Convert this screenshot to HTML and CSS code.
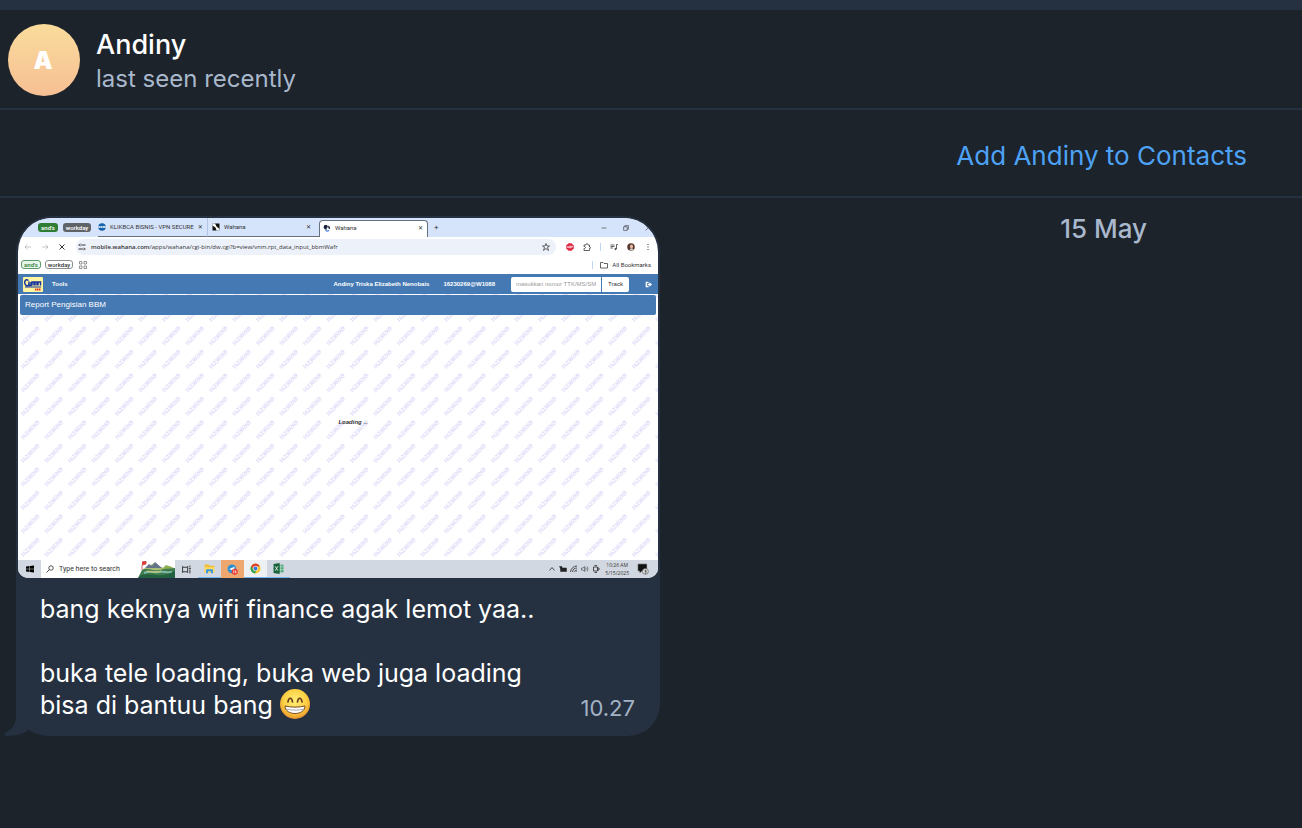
FILE: index.html
```html
<!DOCTYPE html>
<html lang="id">
<head>
    <meta charset="UTF-8">
    <title>Andiny</title>
    <link rel="stylesheet" href="styles.css">
</head>
<body>

    <header class="chat-header">
        <div class="avatar">A</div>
        <div class="peer">
            <h1>Andiny</h1>
            <p>last seen recently</p>
        </div>
    </header>

    <div class="contact-bar">
        <button type="button">Add Andiny to Contacts</button>
    </div>

    <main class="chat">
        <article class="bubble">
            <div class="photo">

                <!-- browser tabs -->
                <div class="tabs">
                    <span class="chip green">and's</span>
                    <span class="chip gray wide">workday</span>
                    <div class="tab first">
                        <svg class="icon" viewBox="0 0 16 16"><circle cx="8" cy="8" r="7.5" fill="#1463ac"/><path d="M1 8h14" stroke="#fff" stroke-width="4"/><path d="M3 8h10" stroke="#1463ac" stroke-width="2" stroke-dasharray="3 1"/></svg>
                        <span class="title">KLIKBCA BISNIS - VPN SECURE</span>
                        <span class="close">✕</span>
                    </div>
                    <div class="tab second">
                        <svg class="icon" viewBox="0 0 16 16"><path d="M1 1h14v14H1z" fill="#111"/><path d="M1 1l5 0 3 6 6 5v3H9L7 9 1 5z" fill="#fff"/></svg>
                        <span class="title">Wahana</span>
                        <span class="close">✕</span>
                    </div>
                    <div class="tab active">
                        <svg class="icon" viewBox="0 0 16 16"><path d="M3 2h5l2 4-3 2 1 3H4L1 7z" fill="#16223a"/><path d="M10 3l4 3v4l-3-1z" fill="#16223a"/><path d="M4 11l4 2 5-1-2 3H6z" fill="#2f6fe0"/></svg>
                        <span class="title">Wahana</span>
                        <span class="close">✕</span>
                    </div>
                    <span class="plus">+</span>
                    <div class="window-buttons">
                        <svg viewBox="0 0 10 10"><path d="M1 5h8"/></svg>
                        <svg viewBox="0 0 10 10"><path d="M1 3h6v6H1zM3 3V1h6v6H7"/></svg>
                        <svg viewBox="0 0 10 10"><path d="M1 1l8 8M9 1l-8 8"/></svg>
                    </div>
                </div>

                <!-- address row -->
                <div class="toolbar">
                    <div class="nav-icons">
                        <svg viewBox="0 0 16 16" class="dim"><path d="M14 8H2M7 3L2 8l5 5"/></svg>
                        <svg viewBox="0 0 16 16" class="dim"><path d="M2 8h12M9 3l5 5-5 5"/></svg>
                        <svg viewBox="0 0 16 16"><path d="M3 3l10 10M13 3L3 13" stroke-width="2"/></svg>
                    </div>
                    <div class="address">
                        <svg viewBox="0 0 16 16"><path d="M1 4h3M8 4h7M1 12h7M12 12h3" stroke-width="2"/><circle cx="5" cy="4" r="2"/><circle cx="11" cy="12" r="2"/></svg>
                        <span><b>mobile.wahana.com</b>/apps/wahana/cgi-bin/dw.cgi?b=view/vnm.rpt_data_input_bbmWafr</span>
                        <svg class="star" viewBox="0 0 16 16"><path d="M8 1l2 5h5l-4 3 2 6-5-4-5 4 2-6-4-3h5z" stroke-width="1.5"/></svg>
                    </div>
                    <div class="extensions">
                        <svg viewBox="0 0 16 16"><path d="M5 1h6l4 4v6l-4 4H5l-4-4V5z" fill="#df2943" stroke="#df2943"/><path d="M3 10V7h2v3M3 8.5h2M7 10V6h2v4H7M7 8h2M11 10V6h2v2h-2" stroke="#fff"/></svg>
                        <svg viewBox="0 0 16 16"><path d="M2 4h4c0-4 4-4 4 0h3v4c3 0 3 3 0 3v4H2v-4c4 0 4-4 0-4z" stroke-width="1.5"/></svg>
                        <i class="divider"></i>
                        <svg viewBox="0 0 16 16"><path d="M1 4h8M1 7h8M1 10h5M13 12V3h3" stroke-width="1.5"/><circle cx="11" cy="12" r="1.5" fill="#333"/></svg>
                        <svg class="profile" viewBox="0 0 16 16"><circle cx="8" cy="8" r="7.5" fill="#59392f" stroke="none"/><ellipse cx="9" cy="7" rx="3" ry="4" fill="#e9bda5" stroke="none"/><path d="M5 15l2-4h4l2 3z" fill="#dad5d9" stroke="none"/></svg>
                        <svg viewBox="0 0 16 16"><path d="M8 2v2M8 7v2M8 12v2" stroke-width="2"/></svg>
                    </div>
                </div>

                <!-- bookmarks -->
                <div class="bookmarks">
                    <span class="chip line-green">and's</span>
                    <span class="chip line-gray wide">workday</span>
                    <svg class="grid" viewBox="0 0 16 16"><path d="M1 1h5v5H1zM10 1h5v5h-5zM1 10h5v5H1zM10 10h5v5h-5z"/></svg>
                    <div class="all">
                        <svg viewBox="0 0 16 16"><path d="M1 3h5l2 2h7v9H1z" stroke-width="1.5"/></svg>
                        <span>All Bookmarks</span>
                    </div>
                </div>

                <!-- report page -->
                <div class="page">
                    <svg class="watermark" aria-hidden="true">
                        <defs>
                            <pattern id="stamp" y="2" width="23.5" height="23.5" patternUnits="userSpaceOnUse">
                                <text x="5" y="23" transform="rotate(-46 5 23)">16230269</text>
                            </pattern>
                        </defs>
                        <rect width="100%" height="100%" fill="url(#stamp)"/>
                    </svg>
                    <nav class="site-nav">
                        <svg class="logo" viewBox="0 0 40 30"><rect width="40" height="30" rx="2" fill="#fff4a0"/><path d="M11 7C5 3 2 9 4 14s7 5 8 0V9M12 10v7l4 0V10M18 17v-7h4v7M24 17v-7h4v7M30 17v-7h5v7" fill="none" stroke="#16349e" stroke-width="3"/><path d="M4 20h32" stroke="#16349e" stroke-width="2"/><path d="M24 25h12" stroke="#e23222" stroke-width="4" stroke-dasharray="3 1"/></svg>
                        <a href="#">Tools</a>
                        <span class="user">Andiny Triska Elizabeth Nenobais</span>
                        <span class="user-id">16230269@W1088</span>
                        <form class="track">
                            <input type="text" aria-label="Nomor" placeholder="masukkan nomor TTK/MS/SM">
                            <button type="button">Track</button>
                        </form>
                        <svg class="logout" viewBox="0 0 16 16"><path d="M8 3H3v10h5M6 8h6" fill="none" stroke="#fff" stroke-width="3"/><path d="M10 3l6 5-6 5z" fill="#fff"/></svg>
                    </nav>
                    <h2>Report Pengisian BBM</h2>
                    <p class="loading">Loading <small>...</small></p>
                </div>

                <!-- windows taskbar -->
                <div class="taskbar">
                    <div class="start">
                        <svg viewBox="0 0 16 16"><path d="M0 3l7-1v5.5H0zM8 2l8-1v6.5H8zM0 8.5h7V14l-7-1zM8 8.5h8V15l-8-1z" fill="#000"/></svg>
                    </div>
                    <div class="search">
                        <svg viewBox="0 0 16 16"><circle cx="10" cy="6" r="4.5" stroke-width="1.5"/><path d="M7 9l-6 6" stroke-width="1.5"/></svg>
                        <span>Type here to search</span>
                        <svg class="hills" viewBox="0 0 37 17"><path d="M5 8l6-3 5-3 5 4 6 1 5-2 5 4v8H2z" fill="#a8bd76"/><path d="M7 7l4-4 3 2 3-4 7 6z" fill="#64748a"/><path d="M24 8l4-4 8 3v5H20z" fill="#8eae50"/><path d="M4 9c8-3 10 2 18 0s10-1 15-2v10H0z" fill="#3d7a4e"/><path d="M6 12c6-3 11 0 15-1s8 1 13 0" fill="none" stroke="#80b9a5" stroke-width="2"/><path d="M9 10c7 2 11 1 14 0" fill="none" stroke="#e4cf6a" stroke-width="1"/><path d="M0 17c3-5 11-4 18-3s13-1 19-4v7z" fill="#246142"/><path d="M4 1l4-1v3l-4 1v5" fill="#df3c37" stroke="#b93835" stroke-width=".7"/></svg>
                    </div>
                    <div class="app small">
                        <svg viewBox="0 0 16 16"><path d="M1 2v2h9V2M1 14v-2h9v2M1 4v8M10 4v8M14 1v3M14 8v7M12 6h4" fill="none" stroke="#222" stroke-width="1.5"/></svg>
                    </div>
                    <div class="app open">
                        <svg viewBox="0 0 16 16"><path d="M1 2h6l1 2h7v10H1z" fill="#f4bd31"/><path d="M1 6h14v8H1z" fill="#ffdc68"/><path d="M3 15V9h10v6h-3v-3H6v3z" fill="#3796df"/></svg>
                    </div>
                    <div class="app alert">
                        <svg viewBox="0 0 20 20"><circle cx="9" cy="9" r="8" fill="#2c91d1"/><path d="M4 9l10-4-2 9-4-3z" fill="#fff"/><circle cx="14" cy="14" r="5.5" fill="#e83932"/><path d="M12 11v6M16 11l-2 4h3M16 13v4" stroke="#fff" fill="none"/></svg>
                    </div>
                    <div class="app open current">
                        <svg viewBox="0 0 20 20"><circle cx="10" cy="10" r="9" fill="#f4c52e"/><path d="M2 6a9 9 0 0 1 16 0l-8 1-3 5z" fill="#df4034"/><path d="M2 6l5 8 4 1-2 4A9 9 0 0 1 2 6z" fill="#30a452"/><circle cx="10" cy="10" r="4.5" fill="#fff"/><circle cx="10" cy="10" r="3.5" fill="#3479db"/></svg>
                    </div>
                    <div class="app open">
                        <svg viewBox="0 0 20 20"><path d="M9 3h10v14H9z" fill="#4aa875"/><path d="M14 3v14M9 7h10M9 12h10" stroke="#d7eddf"/><path d="M1 2l11-2v20L1 18z" fill="#18633b"/><path d="M4 6l5 8M9 6l-5 8" stroke="#fff" stroke-width="1.5"/></svg>
                    </div>
                    <div class="tray">
                        <svg viewBox="0 0 16 16"><path d="M3 11l5-6 5 6" stroke-width="1.5"/></svg>
                        <svg viewBox="0 0 16 16"><path d="M3 6h12v7H3zM1 3h5v4H3z" fill="#222"/></svg>
                        <svg viewBox="0 0 16 16"><path d="M1 14A13 13 0 0 1 14 2M5 14a9 9 0 0 1 9-8M9 14a5 5 0 0 1 5-4M13 14v-1" stroke-width="1.5"/></svg>
                        <svg viewBox="0 0 16 16"><path d="M1 6h3l3-3v10l-3-3H1zM9 5q3 3 0 6M12 3q4 5 0 10"/></svg>
                        <svg viewBox="0 0 16 16"><path d="M3 4h8v8H3zM5 1h5M5 15h5M11 6h3v4h-3" stroke-width="1.5"/></svg>
                        <div class="clock">10:26 AM<br>5/15/2025</div>
                        <svg class="notice" viewBox="0 0 20 20"><path d="M2 2h14v11H8l-3 3v-3H2z" fill="#111"/><circle cx="14" cy="14" r="5" fill="#ddd" stroke="#555"/><path d="M13 12h2v2h-2M15 14v3h-2" stroke="#222"/></svg>
                    </div>
                </div>
            </div>

            <div class="message">
                <p>bang keknya wifi finance agak lemot yaa..<br><br>buka tele loading, buka web juga loading<br>bisa di bantuu bang<svg class="emoji" viewBox="0 0 32 32" role="img" aria-label="😁">
                    <defs>
                        <radialGradient id="face" cx=".5" cy=".4" r=".6">
                            <stop offset="0" stop-color="#fff078"/>
                            <stop offset=".65" stop-color="#fccf43"/>
                            <stop offset="1" stop-color="#e9922b"/>
                        </radialGradient>
                    </defs>
                    <circle cx="16" cy="16" r="15" fill="url(#face)"/>
                    <path d="M9 14c.5-5 4-5 4.5 0M18.5 14c.5-5 4-5 4.5 0" fill="none" stroke="#70401b" stroke-width="1.7" stroke-linecap="round"/>
                    <path d="M6 18c6 1.500 14 1.500 20 0 0 10-20 10-20 0z" fill="#fff" stroke="#7b4a1d"/>
                    <path d="M7 21c6 1.500 12 1.500 18 0" fill="none" stroke="#a9a9a9"/>
                </svg></p>
                <time>10.27</time>
            </div>
            <svg class="tail" viewBox="0 0 26 36"><path d="M12 0v16c0 9-5 14-11 17-1 1-1 3 1 3 10 0 18-2 24-7V0z" fill="#253040"/></svg>
        </article>
        <time class="day">15 May</time>
    </main>

</body>
</html>
```

FILE: styles.css
```css
* {
    margin: 0;
    padding: 0;
    box-sizing: border-box;
}
body {
    background-color: #1c232b;
    border-top: 10px solid #253040;
    font-family: Inter, sans-serif;
    font-size: 26px;
    color: white;
}
button {
    border: none;
    background: none;
    font-family: inherit;
    cursor: pointer;
}
.chat-header {
    display: flex;
    align-items: center;
    gap: 16px;
    padding: 14px 8px 12px;
    border-bottom: 2px solid #253040;
}
.avatar {
    width: 72px;
    height: 72px;
    padding: 1px 2px 0 0;
    border-radius: 50%;
    background: linear-gradient(#fadc9c, #f6bf94);
    font-size: 24px;
    font-weight: 900;
    line-height: 72px;
    text-align: center;
}
.peer {
    padding-top: 3px;
}
.peer h1 {
    font-size: 27px;
    font-weight: 500;
    line-height: 34px;
}
.peer p {
    font-size: 24px;
    line-height: 34px;
    color: #a9b8cc;
}
.contact-bar {
    display: flex;
    justify-content: flex-end;
    padding: 26px 55px 20px;
    border-bottom: 2px solid #253040;
}
.contact-bar button {
    font-size: 26px;
    line-height: 40px;
    color: #4da2f5;
}
.chat {
    display: flex;
    justify-content: space-between;
    align-items: flex-start;
    padding: 18px 155px 18px 16px;
}
.day {
    font-size: 26px;
    font-weight: 500;
    line-height: 26px;
    color: #a9b8cc;
}
.bubble {
    position: relative;
    width: 644px;
    padding: 2px;
    border-radius: 36px 36px 32px 32px;
    background-color: #253040;
}
.tail {
    position: absolute;
    left: -12px;
    bottom: 0;
    width: 26px;
    height: 36px;
}
.message {
    display: flex;
    justify-content: space-between;
    align-items: flex-end;
    padding: 15px 23px 13px 22px;
}
.message p {
    font-size: 25px;
    line-height: 32px;
}
.message time {
    font-size: 22px;
    line-height: 26px;
    color: #a3b3c6;
}
.emoji {
    width: 32px;
    height: 32px;
    margin-top: -6px;
    margin-left: 6px;
    vertical-align: -6px;
}

/* shared photo */
.photo {
    display: flex;
    flex-direction: column;
    height: 360px;
    border-radius: 34px 34px 10px 10px;
    overflow: hidden;
    background-color: white;
    color: #333;
    font-family: Roboto, sans-serif;
    font-size: 6px;
    line-height: 8px;
    white-space: nowrap;
}
.photo svg {
    display: block;
    flex: none;
}
.tabs {
    display: flex;
    align-items: center;
    height: 19px;
    padding-left: 20px;
    background-color: #d5e3fb;
}
.chip {
    flex: none;
    width: 20px;
    border-radius: 3px;
    line-height: 9px;
    font-weight: 500;
    text-align: center;
}
.chip.wide {
    width: 28px;
}
.chip.green {
    margin-right: 5px;
    background-color: #2f7d35;
    color: white;
}
.chip.gray {
    background-color: #5f6368;
    color: white;
}
.chip.line-green {
    border: 1px solid #5b9b67;
    background-color: #e6f5e9;
    color: #2f7d35;
    line-height: 7px;
}
.chip.line-gray {
    border: 1px solid #8a8d91;
    line-height: 7px;
}
.tab {
    display: flex;
    flex: none;
    align-items: center;
    gap: 4px;
    height: 19px;
    border-bottom: 1px solid #68707c;
}
.tab .icon {
    width: 8px;
    height: 8px;
}
.tab .title {
    flex: 1;
}
.tab .close {
    font-family: "DejaVu Sans", sans-serif;
}
.tab.first {
    width: 109px;
    margin-left: 7px;
    padding-right: 8px;
}
.tab.second {
    width: 112px;
    padding: 0 8px 0 4px;
    border-left: 1px solid #b2c5e5;
}
.tab.active {
    width: 109px;
    height: 17px;
    align-self: flex-end;
    padding: 0 4px 3px 3px;
    border: 1px solid #68707c;
    border-bottom: none;
    border-radius: 4px 4px 0 0;
    background-color: white;
}
.plus {
    margin-left: 6px;
    font-size: 8px;
}
.window-buttons {
    display: flex;
    gap: 16px;
    margin-left: auto;
    padding-right: 7px;
}
.window-buttons svg {
    width: 6px;
    height: 6px;
    fill: none;
    stroke: #333;
}
.toolbar {
    display: flex;
    align-items: center;
    height: 20px;
    padding: 0 6px;
}
.toolbar svg,
.bookmarks svg {
    width: 8px;
    height: 8px;
    fill: none;
    stroke: #333;
}
.toolbar .dim {
    stroke: #8a8d91;
}
.nav-icons {
    display: flex;
    gap: 9px;
}
.address {
    display: flex;
    flex: 1;
    align-items: center;
    gap: 5px;
    height: 16px;
    margin: 0 10px;
    padding: 0 6px 0 2px;
    border-radius: 8px;
    background-color: #edf1fa;
    font-family: "Open Sans", sans-serif;
}
.address b {
    font-weight: 600;
}
.address .star {
    margin-left: auto;
}
.extensions {
    display: flex;
    gap: 9px;
}
.divider {
    width: 1px;
    height: 8px;
    background-color: #c3d4ef;
}
.bookmarks {
    display: flex;
    align-items: center;
    gap: 4px;
    height: 17px;
    padding: 0 7px 2px 3px;
}
.bookmarks .grid {
    margin-left: 2px;
}
.all {
    display: flex;
    gap: 4px;
    margin-left: auto;
    padding-left: 7px;
    border-left: 1px solid #c3d4ef;
}
.page {
    position: relative;
    flex: 1;
    font-family: "Liberation Sans", sans-serif;
}
.page .watermark {
    position: absolute;
    top: 0;
    left: 0;
    width: 100%;
    height: 100%;
}
.watermark text {
    font-family: "Liberation Serif", serif;
    font-size: 6px;
    fill: #beb8f0;
}
.site-nav {
    position: relative;
    display: flex;
    align-items: center;
    height: 20px;
    padding: 0 6px 0 5px;
    background-color: #4479b3;
    color: white;
    font-weight: bold;
}
.site-nav .logo {
    width: 20px;
    height: 15px;
    margin-right: 9px;
}
.site-nav a {
    color: white;
    text-decoration: none;
}
.user {
    margin-left: auto;
}
.user-id {
    margin: 0 16px 0 14px;
}
.track {
    display: flex;
    gap: 1px;
    margin-right: 16px;
}
.track input {
    width: 90px;
    height: 15px;
    padding: 0 5px;
    border: none;
    border-radius: 2px 0 0 2px;
    font-family: inherit;
    font-size: 6px;
}
.track input::placeholder {
    color: #999;
}
.track button {
    width: 27px;
    height: 15px;
    border-radius: 0 2px 2px 0;
    background-color: white;
    color: #333;
    font-size: 6px;
}
.logout {
    width: 7px;
    height: 7px;
}
.page h2 {
    position: relative;
    margin: 1px 2px 0;
    padding-left: 5px;
    border-radius: 2px;
    background-color: #4479b3;
    color: white;
    font-size: 8px;
    font-weight: normal;
    line-height: 20px;
}
.loading {
    position: relative;
    margin-top: 103px;
    padding-right: 10px;
    padding-left: 40px;
    text-align: center;
    font-style: italic;
    font-weight: bold;
}
.loading small {
    font-size: 5px;
}
.taskbar {
    display: flex;
    height: 18px;
    background-color: #d2d8e1;
}
.start {
    display: flex;
    align-items: center;
    justify-content: center;
    width: 23px;
}
.start svg {
    width: 8px;
    height: 8px;
}
.search {
    display: flex;
    align-items: center;
    gap: 5px;
    width: 134px;
    padding-left: 5px;
    background-color: white;
    font-size: 7px;
}
.search svg {
    width: 8px;
    height: 8px;
    fill: none;
    stroke: #222;
}
.search .hills {
    width: 37px;
    height: 17px;
    margin-left: auto;
    stroke: none;
}
.app {
    display: flex;
    align-items: center;
    justify-content: center;
    width: 23px;
}
.app svg {
    width: 11px;
    height: 11px;
}
.app.small svg {
    width: 9px;
    height: 9px;
}
.app.open {
    border-bottom: 1px solid #75b5ec;
}
.app.alert {
    background-color: #eea76f;
}
.app.current {
    background-color: #eef1f4;
}
.tray {
    display: flex;
    align-items: center;
    gap: 3px;
    margin-left: auto;
    padding-right: 9px;
}
.tray svg {
    width: 8px;
    height: 8px;
    fill: none;
    stroke: #222;
}
.clock {
    margin: 0 5px 0 2px;
    text-align: center;
    font-family: "Open Sans", sans-serif;
    font-size: 5px;
}
.tray .notice {
    width: 12px;
    height: 12px;
}
```
